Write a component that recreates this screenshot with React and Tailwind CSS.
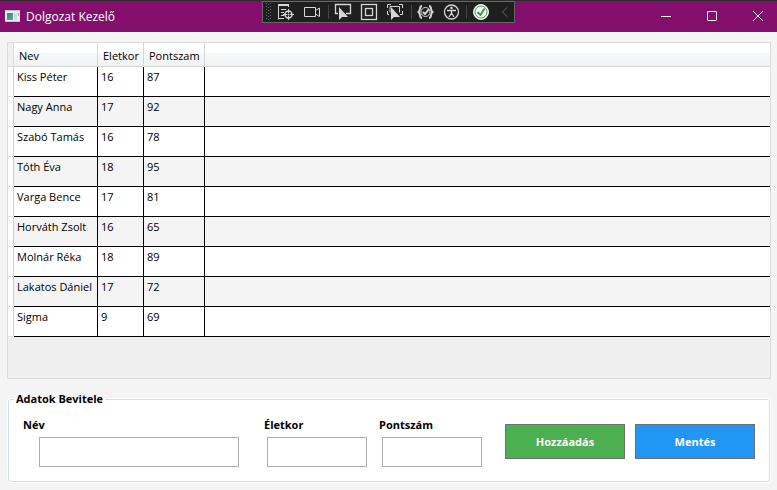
import { useState } from "react";

const STUDENTS = [
  ["Kiss Péter", 16, 87],
  ["Nagy Anna", 17, 92],
  ["Szabó Tamás", 16, 78],
  ["Tóth Éva", 18, 95],
  ["Varga Bence", 17, 81],
  ["Horváth Zsolt", 16, 65],
  ["Molnár Réka", 18, 89],
  ["Lakatos Dániel", 17, 72],
  ["Sigma", 9, 69],
];

function AppIcon() {
  return (
    <svg width="16" height="13" viewBox="0 0 16 13" aria-hidden="true">
      <defs>
        <linearGradient id="pane" x1="0" y1="0" x2="1" y2="1">
          <stop offset="0" stopColor="#3b78a8" />
          <stop offset="1" stopColor="#5fae7a" />
        </linearGradient>
      </defs>
      <rect width="15" height="12" fill="#e8ecef" />
      <rect width="15" height="1" fill="#b9bfc6" />
      <rect y="11" width="15" height="1" fill="#c3c9ce" />
      <rect x="2" y="3" width="6" height="7" fill="url(#pane)" />
      <rect x="9" y="3" width="3" height="7" fill="#d3dadd" />
      <rect x="13" y="3" width="1" height="3" fill="#9aa5ab" />
    </svg>
  );
}

function DebugToolbar() {
  return (
    <div className="absolute inset-x-0 top-0 mx-auto h-[22px] w-[253px] border border-[#666] bg-[#1f1f1f]">
      <svg className="block" width="251" height="20" viewBox="263 2 251 20" fill="none" stroke="#d6d6d6" aria-hidden="true">
        <g fill="#666" stroke="none">
          {[3, 6, 9, 12, 15, 18].map((y) => (
            <g key={y}>
              <rect x="266" y={y} width="1" height="1" />
              <rect x="270" y={y} width="1" height="1" />
              <rect x="268" y={y + 1} width="1" height="1" />
            </g>
          ))}
        </g>
        <path d="M278.500 19.500V4.500H288.500V7M278.500 18.500H284M281 9.500H286M281 12.500H284M281 15.500H284" />
        <path d="M278 5H289" strokeWidth="2" />
        <circle cx="288.500" cy="14.500" r="3.500" strokeWidth="1.500" />
        <circle cx="288.500" cy="14.500" r="1" fill="#d6d6d6" stroke="none" />
        <path d="M288.500 9V13M288.500 16V20M283 14.500H287M290 14.500H294" />
        <path d="M304.500 7.500H315.500V16.500H304.500ZM315.500 10.500L319.500 8V16.500L315.500 14" />
        <path d="M328.500 5V19M411.500 5V19M466.500 5V19" stroke="#444" />
        <path d="M338 13.500H335.500V4.500H350.500V13.500H346" strokeWidth="1.300" />
        <path d="M339 7V20L342 17H348Z" fill="#d6d6d6" stroke="none" />
        <rect x="361.500" y="4.500" width="15" height="15" strokeWidth="1.300" />
        <rect x="365.500" y="8.500" width="7" height="7" strokeWidth="1.300" />
        <path d="M387.500 8V4.500H391M399 4.500H402.500V8M387.500 11V14.500H389M400 14.500H402.500V11M390 12.500V6.500H399.500V12.500" />
        <path d="M391 7V20L394 17H400Z" fill="#d6d6d6" stroke="none" />
        <path d="M422 6C419 6 421 10 418.500 12C421 14 419 18 422 18M429 6C432 6 430 10 432.500 12C430 14 432 18 429 18" strokeWidth="2" />
        <circle cx="425.500" cy="12" r="4.500" />
        <path d="M423 12L425 14L429 9" strokeWidth="2" />
        <circle cx="451.500" cy="12" r="7" strokeWidth="1.300" />
        <circle cx="451.500" cy="8" r="1.300" fill="#d6d6d6" stroke="none" />
        <path d="M447 10.500H456M451.500 10V13L449 17M451.500 13L454 17" strokeWidth="1.300" />
        <circle cx="481" cy="12" r="7.500" fill="#fff" stroke="#e8f3e8" />
        <circle cx="481" cy="12" r="6" stroke="#3f9b45" />
        <path d="M477.500 12L480.500 15L484.500 8.500" stroke="#2f9a3a" strokeWidth="2" />
        <path d="M507 7.500L502.500 12L507 16.500" stroke="#666" />
      </svg>
    </div>
  );
}

function TitleBar() {
  const button = "flex h-full w-[46px] shrink-0 items-center justify-center";
  return (
    <header className="relative flex h-8 items-center overflow-hidden border-t border-[#2b2b2b] bg-[#830e6b] pl-[5px] text-white">
      <AppIcon />
      <h1 className="ml-[5px] grow text-[12px] leading-4">Dolgozat Kezelő</h1>
      <DebugToolbar />
      <div className="-mr-1 flex h-full">
        <button type="button" aria-label="Minimize" className={button}>
          <svg width="10" height="11" stroke="white"><path d="M0 5.500H10" /></svg>
        </button>
        <button type="button" aria-label="Maximize" className={button}>
          <svg width="10" height="11" stroke="white" fill="none"><rect x="0.5" y="0.5" width="9" height="9" rx="0.500" /></svg>
        </button>
        <button type="button" aria-label="Close" className={button}>
          <svg width="10" height="11" stroke="white"><path d="M0 0L10 10M10 0L0 10" /></svg>
        </button>
      </div>
    </header>
  );
}

function StudentGrid({ rows }) {
  const head = "border-b border-r border-[#d5d5d5] bg-linear-to-b from-white from-40% via-[#f6f8fa] via-45% to-[#f0f2f4] pl-[5px] pt-[2px] text-left font-normal";
  const cell = "whitespace-nowrap border-b border-r border-black pl-[3px] pt-[2px] align-top";
  return (
    <div className="min-h-[337px] border border-[#dcdcdc] bg-[#efefef]">
      <table className="w-full table-fixed border-separate border-spacing-0 leading-4">
        <colgroup>
          <col className="w-[6px]" />
          <col className="w-[84px]" />
          <col className="w-[46px]" />
          <col className="w-[61px]" />
          <col />
        </colgroup>
        <thead>
          <tr className="h-6">
            <td className="border-b border-r border-[#dcdcdc] bg-[#f0f0f0]" />
            <th scope="col" className={head}>Nev</th>
            <th scope="col" className={head}>Eletkor</th>
            <th scope="col" className={head}>Pontszam</th>
            <td className="border-b border-[#d5d5d5] bg-linear-to-b from-white from-40% via-[#f6f8fa] via-45% to-[#f0f2f4]" />
          </tr>
        </thead>
        <tbody>
          {rows.map(([name, age, score], i) => (
            <tr key={i} className="h-[30px] bg-white even:bg-[#f4f4f4]">
              <td className="border-b border-r border-b-[#e6e6e6] border-r-[#d0d0d0] bg-white" />
              <td className={cell}>{name}</td>
              <td className={cell}>{age}</td>
              <td className={cell}>{score}</td>
              <td className="border-b border-black" />
            </tr>
          ))}
        </tbody>
      </table>
    </div>
  );
}

function Field({ label, value, onChange, className, inputClass }) {
  return (
    <label className={"flex flex-col gap-1 font-bold " + className}>
      {label}
      <input
        value={value}
        onChange={(e) => onChange(e.target.value)}
        className={"h-[30px] border border-[#abadb3] bg-white px-1 font-normal outline-none " + inputClass}
      />
    </label>
  );
}

export default function App() {
  const [rows, setRows] = useState(STUDENTS);
  const [name, setName] = useState("");
  const [age, setAge] = useState("");
  const [score, setScore] = useState("");
  const action = "h-[35px] w-[120px] border border-[#707070] font-bold text-white";

  return (
    <div className="min-h-screen bg-[#f4f4f4] font-['Open_Sans','Noto_Sans',sans-serif] text-[11px] leading-4 text-black">
      <TitleBar />
      <main className="pl-[7px] pr-[6px] pt-[10px]">
        <StudentGrid rows={rows} />
        <form onSubmit={(e) => e.preventDefault()}>
          <fieldset className="mx-px mt-3 flex rounded-[3px] border border-[#d5dfe5] bg-white pb-[14px] pl-[14px] pr-[14px] shadow-[0_0_0_1px_#fff]">
            <legend className="-ml-[9px] px-[2px] font-bold">Adatok Bevitele</legend>
            <div className="flex grow items-start pt-[10px]">
              <Field label="Név" value={name} onChange={setName} className="w-[216px]" inputClass="ml-4" />
              <Field label="Életkor" value={age} onChange={setAge} className="ml-[25px] w-[103px]" inputClass="ml-[3px]" />
              <Field label="Pontszám" value={score} onChange={setScore} className="ml-3 w-[103px]" inputClass="ml-[3px]" />
              <div className="ml-auto mt-[7px] flex gap-[10px]">
                <button type="button" className={action + " bg-[#4caf50]"} onClick={() => setRows([...rows, [name, age, score]])}>
                  Hozzáadás
                </button>
                <button type="submit" className={action + " bg-[#2196f3]"}>Mentés</button>
              </div>
            </div>
          </fieldset>
        </form>
      </main>
    </div>
  );
}
